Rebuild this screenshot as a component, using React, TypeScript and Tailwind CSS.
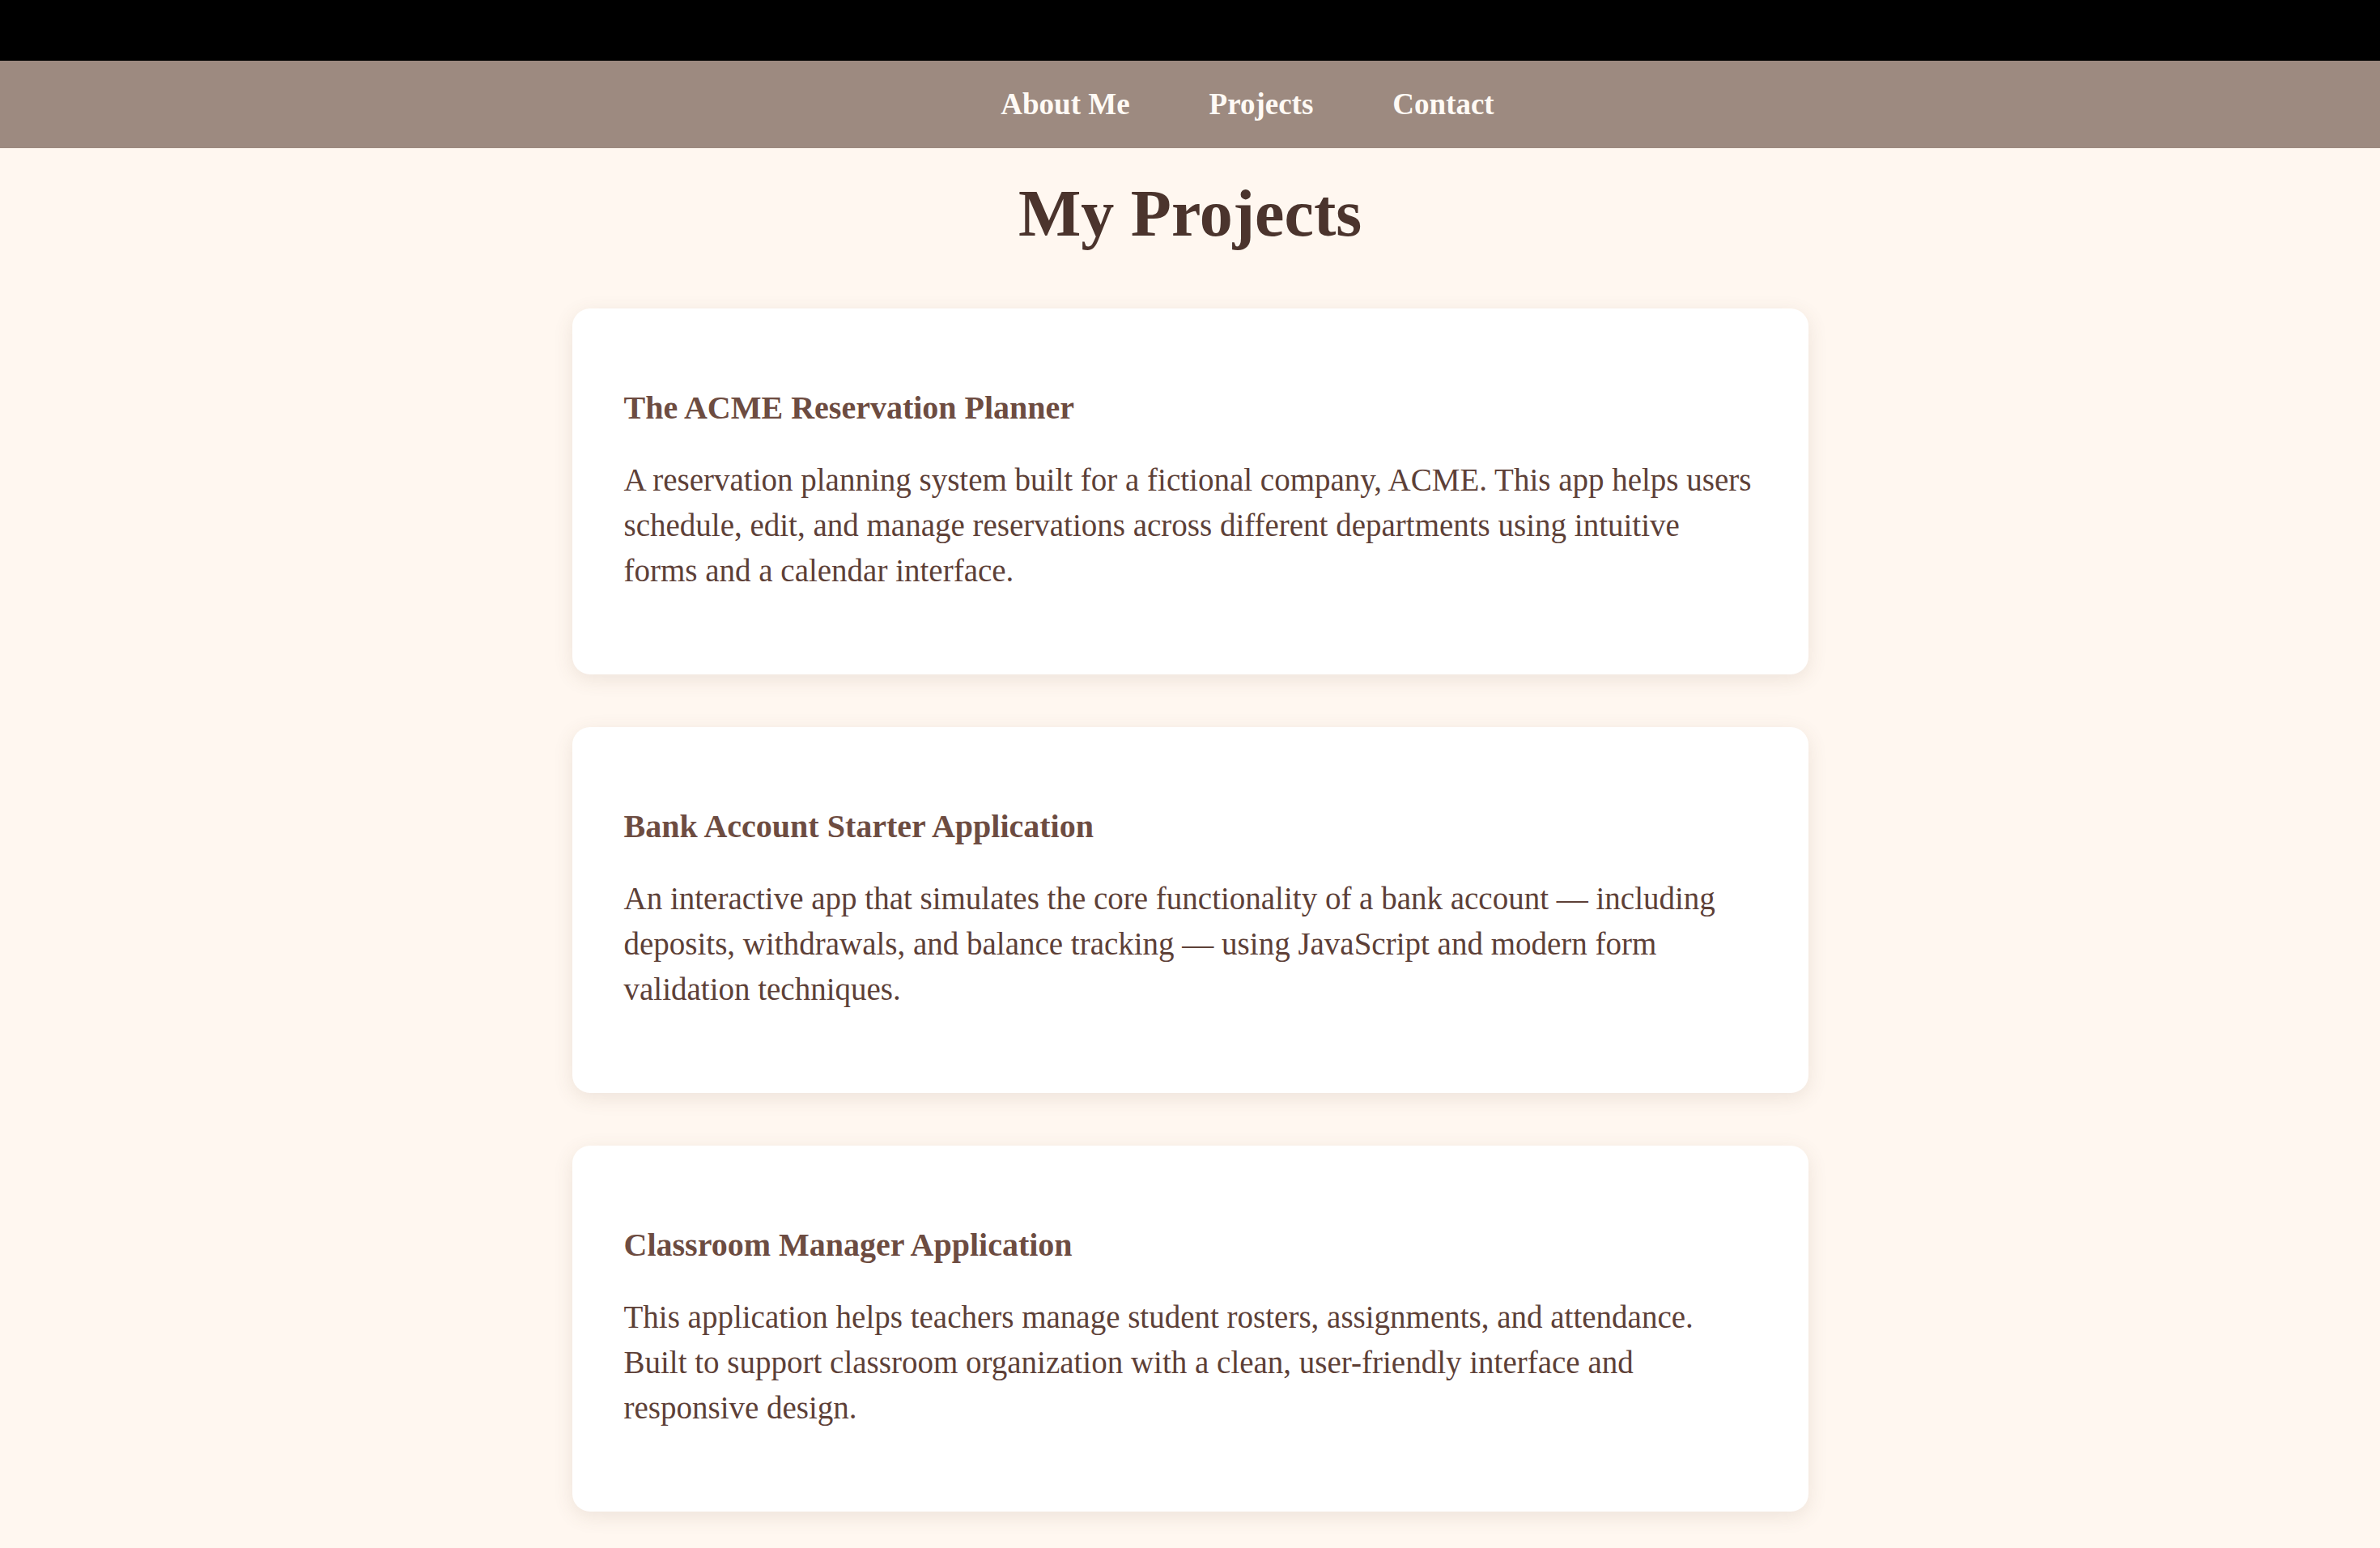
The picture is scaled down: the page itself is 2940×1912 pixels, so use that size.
import React from 'react';

const PROJECTS = [
  {
    title: 'The ACME Reservation Planner',
    text: 'A reservation planning system built for a fictional company, ACME. This app helps users schedule, edit, and manage reservations across different departments using intuitive forms and a calendar interface.',
  },
  {
    title: 'Bank Account Starter Application',
    text: 'An interactive app that simulates the core functionality of a bank account — including deposits, withdrawals, and balance tracking — using JavaScript and modern form validation techniques.',
  },
  {
    title: 'Classroom Manager Application',
    text: 'This application helps teachers manage student rosters, assignments, and attendance. Built to support classroom organization with a clean, user-friendly interface and responsive design.',
  },
];

const NAV = ['About Me', 'Projects', 'Contact'];

export default function App() {
  return (
    <div className="min-h-screen bg-[#fff7f0] font-['Liberation_Serif',_serif]">
      {/* top strip */}
      <div className="h-[75px] bg-black" />

      {/* Nav */}
      <nav className="h-[108px] bg-[#9d8a80] flex items-center justify-center pl-[142px]">
        <ul className="flex gap-[98px]">
          {NAV.map(n => (
            <li key={n}>
              <a href="#" className="text-[#fffaf5] text-[37px] font-bold">{n}</a>
            </li>
          ))}
        </ul>
      </nav>

      <main className="flex flex-col items-center pb-[44px]">
        <h1 className="text-[#4b342d] text-[82px] font-bold leading-none mt-[40px] mb-[76px]">My Projects</h1>

        <div className="flex flex-col gap-[65px]">
          {PROJECTS.map(p => (
            <div key={p.title} className="w-[1527px] bg-white rounded-[22px] shadow-[0_6px_24px_rgba(110,80,60,0.12)] px-[64px] pt-[100px] pb-[100px]">
              <h3 className="text-[#6d4c41] text-[40px] font-bold leading-[1.15] mb-[38px]">{p.title}</h3>
              <p className="text-[#5d4037] text-[39px] leading-[56px]">{p.text}</p>
            </div>
          ))}
        </div>
      </main>
    </div>
  );
}
